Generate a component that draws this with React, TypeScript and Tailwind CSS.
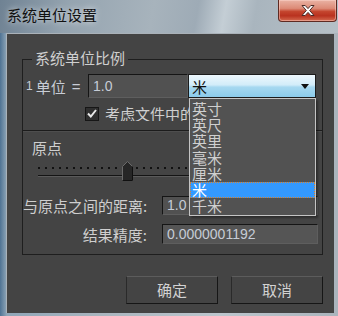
import React from 'react';

const cjk = { fontFamily: '"Noto Sans CJK SC", "Noto Sans", sans-serif' };
const latin = { fontFamily: '"Liberation Sans", Arial, sans-serif' };

const units = ['英寸', '英尺', '英里', '毫米', '厘米', '米', '千米'];

const CloseButton = () => (
  <div className="mr-[1px] flex h-[22px] w-[59px] items-center justify-center rounded-b-[4px] border border-t-0 border-[#5e2a22] bg-[linear-gradient(180deg,#eab3a4_0%,#dc8a76_40%,#c4452e_55%,#b9321f_75%,#d46a50_100%)] shadow-[inset_0_0_0_1px_rgba(255,220,210,0.45)]">
    <svg width="16" height="13" viewBox="0 0 16 13">
      <path
        d="M2 1.5h3.2L8 4.6l2.8-3.1H14L9.7 6.5 14 11.5h-3.2L8 8.4l-2.8 3.1H2l4.3-5z"
        fill="#fff"
        stroke="#4a2a26"
        strokeWidth="1"
        strokeLinejoin="round"
      />
    </svg>
  </div>
);

const Field = ({ value, className }: { value: string; className: string }) => (
  <div
    className={`flex items-center border border-t-[#151515] border-l-[#151515] border-r-[#5e5e5e] border-b-[#5e5e5e] bg-[#515151] pl-[4px] text-[14px] text-[#c6ccd6] ${className}`}
    style={latin}
  >
    <span>{value}</span>
  </div>
);

const UnitSelect = () => (
  <div className="relative z-10">
    <div className="flex h-[24px] w-[128px] items-center justify-between border border-[#1c1c1c] bg-[linear-gradient(180deg,#eef8fd_0%,#d2ecf9_45%,#a6d8f0_55%,#8ccbea_100%)] pl-[3px] pr-[6px]">
      <span className="text-[15px] leading-none text-[#111]" style={cjk}>
        米
      </span>
      <svg width="8" height="5" viewBox="0 0 8 5">
        <path d="M0 0h8L4 5z" fill="#111" />
      </svg>
    </div>
    <div className="absolute left-[1px] top-[24px] flex w-[127px] flex-col border border-[#c4c4c4] bg-[#525252] pb-[1px] pt-[2px] shadow-[2px_2px_2px_rgba(0,0,0,0.35)]">
      {units.map((u) => (
        <div
          key={u}
          className={
            u === '米'
              ? 'h-[16.2px] border border-dotted border-[#d9822b] bg-[#3399ff] pl-[1px] text-[15px] leading-[14px] text-white'
              : 'h-[16.2px] pl-[2px] text-[15px] leading-[16px] text-[#cfcfcf]'
          }
          style={cjk}
        >
          {u}
        </div>
      ))}
    </div>
  </div>
);

const Slider = () => (
  <div className="relative ml-[15px] mt-[4px] h-[20px] w-[276px]">
    <div className="mt-[6px] h-[2px] w-full bg-[repeating-linear-gradient(90deg,#111_0_2px,transparent_2px_7px)]" />
    <div className="mt-[6px] h-[2px] w-full border-t border-[#141414] border-b border-b-[#5a5a5a]" />
    <svg className="absolute left-[84px] top-0" width="11" height="20" viewBox="0 0 11 20">
      <path d="M0.5 5.5L5.5 0.5L10.5 5.5V19.5H0.5z" fill="#262626" stroke="#6a6a6a" />
      <path d="M10.5 5.5V19.5H0.5" fill="none" stroke="#101010" />
    </svg>
  </div>
);

export default function App() {
  return (
    <div
      className="flex h-[316px] w-[338px] flex-col overflow-hidden bg-[linear-gradient(90deg,#4f7394_0%,#8fa6b8_2%,#a9b5be_30%,#bcc6cd_65%,#aab4bc_100%)]"
      style={cjk}
    >
      {/* title bar */}
      <div className="flex h-[33px] shrink-0 items-start justify-between bg-[linear-gradient(100deg,#6f8293_0%,#95a4b0_20%,#a7b3bc_45%,#9eabb6_58%,#c4ced5_66%,#a9b5be_75%,#b6c0c7_100%)]">
        <span
          className="pl-[7px] pt-[6px] text-[15px] leading-[18px] text-[#111] [text-shadow:0_0_6px_rgba(255,255,255,0.8)]"
          style={cjk}
        >
          系统单位设置
        </span>
        <CloseButton />
      </div>

      {/* dialog body */}
      <div className="relative mb-[3px] ml-[6px] mr-[4px] flex flex-1 flex-col border-l border-t border-[#aab2b9] bg-[#444444] text-[#cfcfcf]">
        <div className="relative ml-[15px] mt-[25px] flex h-[196px] w-[301px] flex-col border border-[#1e1e1e]">
          <span className="absolute left-[9px] top-[-11px] bg-[#444444] px-[3px] text-[15px] leading-[18px] text-[#cfcfcf]">
            系统单位比例
          </span>

          <div className="mt-[14px] flex items-center">
            <div className="flex w-[65px] items-center pl-[3px] text-[#c8cdd6]">
              <span className="text-[12px]" style={latin}>
                1
              </span>
              <span className="ml-[3px] text-[15px] leading-none">单位</span>
              <span className="ml-[6px] text-[15px] leading-none" style={latin}>
                =
              </span>
            </div>
            <Field value="1.0" className="h-[24px] w-[100px]" />
            <UnitSelect />
          </div>

          <div className="mt-[8px] flex items-center pl-[62px]">
            <div className="flex h-[14px] w-[14px] items-center justify-center border border-[#161616] bg-[#2f2f2f]">
              <svg width="10" height="9" viewBox="0 0 10 9">
                <path d="M1 4.5L3.8 7.5L9 1" fill="none" stroke="#e8e8e8" strokeWidth="2" />
              </svg>
            </div>
            <div className="ml-[6px] w-[85px] overflow-hidden">
              <span className="block w-[90px] whitespace-nowrap text-[15px] leading-none">考虑文件中的</span>
            </div>
          </div>

          <div className="mt-[9px] h-[2px] border-t border-[#1c1c1c] border-b border-b-[#4e4e4e]" />

          <span className="ml-[9px] mt-[7px] text-[15px] leading-[18px]">原点</span>

          <Slider />

          <div className="mt-[15px] flex items-center">
            <span className="w-[124px] text-right text-[15px] leading-none whitespace-nowrap">与原点之间的距离:</span>
            <Field value="1.0" className="ml-[15px] h-[19px] w-[156px]" />
          </div>

          <div className="mt-[9px] flex items-center">
            <span className="w-[124px] text-right text-[15px] leading-none">结果精度:</span>
            <Field value="0.0000001192" className="ml-[15px] h-[20px] w-[156px] bg-[#555555]" />
          </div>
        </div>

        <div className="mt-[21px] flex justify-end gap-[13px] pr-[11px]">
          {['确定', '取消'].map((t) => (
            <div
              key={t}
              className="flex h-[28px] w-[92px] items-center justify-center border border-t-[#5c5c5c] border-l-[#2a2a2a] border-r-[#161616] border-b-[#161616] text-[15px] text-[#d2d2d2]"
            >
              {t}
            </div>
          ))}
        </div>
      </div>
    </div>
  );
}
